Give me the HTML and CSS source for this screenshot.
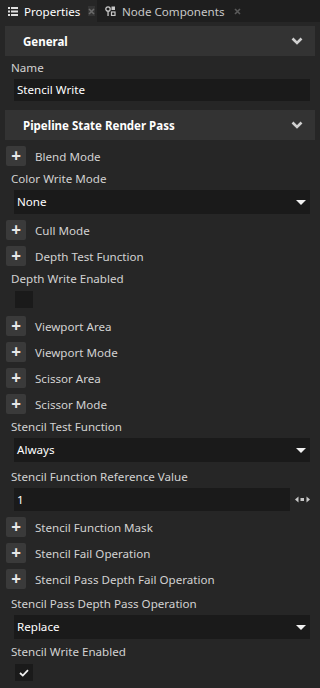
FILE: index.html
```html
<!DOCTYPE html>
<html lang="en">
<head>
    <meta charset="UTF-8">
    <title>Properties</title>
    <link rel="stylesheet" href="styles.css">
</head>
<body>
    <div class="tabs">
        <div class="tab active">
            <svg class="tab-icon" width="10" height="9" viewBox="0 0 10 9">
                <rect x="0" y="0" width="2" height="2" fill="#e0e0e0"/>
                <rect x="3" y="0" width="7" height="2" fill="#e0e0e0"/>
                <rect x="0" y="3.5" width="2" height="2" fill="#e0e0e0"/>
                <rect x="3" y="3.5" width="7" height="2" fill="#e0e0e0"/>
                <rect x="0" y="7" width="2" height="2" fill="#e0e0e0"/>
                <rect x="3" y="7" width="7" height="2" fill="#e0e0e0"/>
            </svg>
            <span class="tab-title">Properties</span>
            <span class="tab-close boxed">
                <svg width="7" height="7" viewBox="0 0 7 7"><path d="M1 1 L6 6 M6 1 L1 6" stroke="#6a6a6a" stroke-width="1.6"/></svg>
            </span>
        </div>
        <div class="tab">
            <svg class="tab-icon" width="11" height="10" viewBox="0 0 11 10">
                <circle cx="3" cy="3" r="2.2" fill="none" stroke="#c8c8c8" stroke-width="1.3"/>
                <rect x="2.4" y="5" width="1.3" height="5" fill="#c8c8c8"/>
                <rect x="6.5" y="0.5" width="3.5" height="3.5" fill="#c8c8c8"/>
                <rect x="6.5" y="6" width="3.5" height="3.5" fill="none" stroke="#c8c8c8" stroke-width="1.2"/>
            </svg>
            <span class="tab-title">Node Components</span>
            <span class="tab-close">
                <svg width="7" height="7" viewBox="0 0 7 7"><path d="M1 1 L6 6 M6 1 L1 6" stroke="#5a5a5a" stroke-width="1.6"/></svg>
            </span>
        </div>
    </div>

    <div class="panel">
        <div class="section-header">
            <span>General</span>
            <svg class="chevron" width="12" height="8" viewBox="0 0 12 8"><path d="M1.5 1.5 L6 6 L10.5 1.5" fill="none" stroke="#d0d0d0" stroke-width="2.6"/></svg>
        </div>
        <div class="label first">Name</div>
        <div class="field text">Stencil Write</div>

        <div class="section-header second">
            <span>Pipeline State Render Pass</span>
            <svg class="chevron" width="12" height="8" viewBox="0 0 12 8"><path d="M1.5 1.5 L6 6 L10.5 1.5" fill="none" stroke="#d0d0d0" stroke-width="2.6"/></svg>
        </div>

        <div class="row"><span class="plus">+</span>Blend Mode</div>
        <div class="label">Color Write Mode</div>
        <div class="field select">None<span class="caret"></span></div>

        <div class="row"><span class="plus">+</span>Cull Mode</div>
        <div class="row"><span class="plus">+</span>Depth Test Function</div>
        <div class="label">Depth Write Enabled</div>
        <div class="checkbox"></div>

        <div class="row"><span class="plus">+</span>Viewport Area</div>
        <div class="row"><span class="plus">+</span>Viewport Mode</div>
        <div class="row"><span class="plus">+</span>Scissor Area</div>
        <div class="row"><span class="plus">+</span>Scissor Mode</div>
        <div class="label">Stencil Test Function</div>
        <div class="field select">Always<span class="caret"></span></div>
        <div class="label spaced">Stencil Function Reference Value</div>
        <div class="number-line">
            <div class="field text number">1</div>
            <svg class="drag" width="15" height="7" viewBox="0 0 15 7">
                <path d="M0 3.5 L3.5 0.5 L3.5 6.5 Z" fill="#c8c8c8"/>
                <rect x="5.5" y="2" width="3.5" height="3" fill="#c8c8c8"/>
                <path d="M15 3.5 L11.5 0.5 L11.5 6.5 Z" fill="#c8c8c8"/>
            </svg>
        </div>

        <div class="row"><span class="plus">+</span>Stencil Function Mask</div>
        <div class="row"><span class="plus">+</span>Stencil Fail Operation</div>
        <div class="row"><span class="plus">+</span>Stencil Pass Depth Fail Operation</div>
        <div class="label spaced">Stencil Pass Depth Pass Operation</div>
        <div class="field select">Replace<span class="caret"></span></div>
        <div class="label">Stencil Write Enabled</div>
        <div class="checkbox checked">
            <svg width="10" height="8" viewBox="0 0 10 8"><path d="M1 4 L3.8 6.6 L9 1.2" fill="none" stroke="#f0f0f0" stroke-width="1.8"/></svg>
        </div>
    </div>
</body>
</html>
```

FILE: styles.css
```css
* { box-sizing: border-box; }
html, body { margin: 0; height: 100%; }
body { background: #262626; color: #d2d2d2; font-family: "Noto Sans", sans-serif; font-size: 11.6px; }

.tabs { display: flex; height: 22px; background: #1e1e1e; }
.tab { display: flex; align-items: center; padding: 0 4px 0 8px; color: #c8c8c8; font-size: 11.6px; }
.tab.active { background: #262626; color: #ffffff; width: 97px; }
.tab-icon { margin-right: 6px; flex: none; }
.tab-title { white-space: nowrap; }
.tab-close { display: flex; align-items: center; justify-content: center; width: 10px; height: 10px; margin-left: 8px; }
.tab-close.boxed { background: #343434; }

.panel { padding: 4px 5px 0 5px; }
.section-header { display: flex; align-items: center; justify-content: space-between; height: 30px; padding: 0 12px 0 18px; background: #333333; color: #ffffff; font-weight: bold; font-size: 11.5px; }
.section-header.second { margin-top: 9px; }

.label { height: 20px; line-height: 20px; margin: 3px 0 0 6px; }
.label.first { margin-top: 2px; }
.label.spaced { margin-top: 5px; }

.field { margin: 1px 5px 1px 9px; background: #1a1a1a; color: #ffffff; padding-left: 3px; }
.field.text { height: 22px; line-height: 22px; }
.field.select { position: relative; height: 24px; line-height: 24px; }
.caret { position: absolute; right: 4px; top: 10px; border-left: 5px solid transparent; border-right: 5px solid transparent; border-top: 5px solid #f0f0f0; }

.number-line { display: flex; align-items: center; margin-bottom: -1px; }
.number-line .field { flex: 1; height: 23px; line-height: 23px; margin-right: 5px; }
.drag { margin-right: 5px; }

.row { display: flex; align-items: center; height: 20px; margin: 6px 0 0 1px; }
.plus { display: flex; align-items: center; justify-content: center; width: 20px; height: 20px; margin-right: 9px; background: #3a3a3a; border-radius: 2px; color: #e8e8e8; font-size: 17px; font-weight: bold; line-height: 20px; }

.checkbox { display: flex; align-items: center; justify-content: center; width: 18px; height: 17px; margin: 2px 0 8px 10px; background: #1a1a1a; }
```
